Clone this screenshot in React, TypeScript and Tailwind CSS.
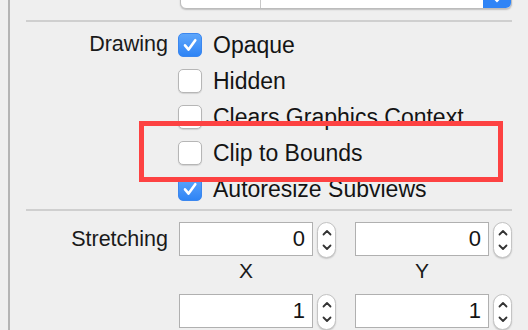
import React from "react";

function Check({ checked }: { checked?: boolean }) {
  if (checked) {
    return (
      <div className="flex h-[24px] w-[24px] shrink-0 items-center justify-center rounded-[5px] border border-[#3b87ef] bg-gradient-to-b from-[#5ea6fb] to-[#2e84f5]">
        <svg width="24" height="24" viewBox="0 0 24 24" className="-m-px">
          <path d="M7 12.3 L10.6 16.6 L17.3 7.2" fill="none" stroke="white" strokeWidth="2.6" strokeLinecap="round" strokeLinejoin="round" />
        </svg>
      </div>
    );
  }
  return (
    <div className="h-[24px] w-[24px] shrink-0 rounded-[5px] border border-[#b6b6b6] bg-white shadow-[0_1px_1px_rgba(0,0,0,0.12)]" />
  );
}

function Row({ label, text, checked }: { label?: string; text: string; checked?: boolean }) {
  return (
    <div className="flex h-[36px] items-center">
      <div className="w-[142px] pr-0 text-right text-[21.5px] leading-none text-[#1a1a1a]">{label}</div>
      <div className="ml-[10px]">
        <Check checked={checked} />
      </div>
      <div className="ml-[11px] whitespace-nowrap text-[23px] leading-none text-[#141414]">{text}</div>
    </div>
  );
}

function Stepper() {
  return (
    <div className="flex h-[36px] w-[19px] flex-col items-center justify-between rounded-full border border-[#c4c4c4] bg-white py-[6px] shadow-[0_1px_1.5px_rgba(0,0,0,0.18)]">
      <svg width="10" height="7" viewBox="0 0 10 7">
        <path d="M1.5 5.5 L5 2 L8.5 5.5" fill="none" stroke="#333" strokeWidth="1.8" strokeLinecap="round" strokeLinejoin="round" />
      </svg>
      <svg width="10" height="7" viewBox="0 0 10 7">
        <path d="M1.5 1.5 L5 5 L8.5 1.5" fill="none" stroke="#333" strokeWidth="1.8" strokeLinecap="round" strokeLinejoin="round" />
      </svg>
    </div>
  );
}

function Field({ value }: { value: string }) {
  return (
    <div className="flex h-[34px] w-[134px] items-center justify-end border border-[#b0b0b0] bg-white pr-[7px] text-[22px] leading-none text-[#141414]">
      {value}
    </div>
  );
}

function FieldPair({ value }: { value: string }) {
  return (
    <div className="flex items-start gap-[4px]">
      <Field value={value} />
      <Stepper />
    </div>
  );
}

export default function App() {
  return (
    <div
      className="relative flex h-[330px] w-[528px] overflow-hidden bg-[#efefef]"
      style={{ fontFamily: '"Liberation Sans", Arial, sans-serif' }}
    >
      <div className="ml-[8px] w-[2px] shrink-0 bg-[#b4b4b4]" />
      <div className="flex flex-1 flex-col pl-[16px] pr-[16px]">
        {/* top control (cut off) */}
        <div className="h-[10px] overflow-visible">
          <div className="ml-[154px] -mt-[22px] flex h-[31px] w-[332px] overflow-hidden rounded-b-[6px] border border-[#bcbcbc] bg-white shadow-[0_1px_1.5px_rgba(0,0,0,0.2)]">
            <div className="w-[80px] border-r border-[#c8c8c8]" />
            <div className="flex-1" />
            <div className="flex w-[28px] justify-center bg-[#2f84f6]">
              <svg width="10" height="26" viewBox="0 0 10 26">
                <path d="M2 19 L5 22 L8 19" fill="none" stroke="white" strokeWidth="2" strokeLinecap="round" />
              </svg>
            </div>
          </div>
        </div>
        <div className="mt-[10px] h-[2px] bg-[#cfcfcf]" />
        <div className="mt-[5px] flex flex-col">
          <Row label="Drawing" text="Opaque" checked />
          <Row text="Hidden" />
          <Row text="Clears Graphics Context" />
          <Row text="Clip to Bounds" />
          <Row text="Autoresize Subviews" checked />
        </div>
        <div className="mt-[2px] h-[2px] bg-[#cfcfcf]" />
        <div className="mt-[11px] flex items-start">
          <div className="flex h-[36px] w-[142px] items-center justify-end text-[21.5px] leading-none text-[#1a1a1a]">
            Stretching
          </div>
          <div className="ml-[11px] flex flex-col">
            <div className="flex items-start gap-[19px]">
              <FieldPair value="0" />
              <FieldPair value="0" />
            </div>
            <div className="mt-[3px] flex h-[20px] gap-[42px] text-[21px] leading-[20px] text-[#1a1a1a]">
              <div className="w-[134px] text-center">X</div>
              <div className="w-[134px] text-center">Y</div>
            </div>
            <div className="mt-[13px] flex items-start gap-[19px]">
              <FieldPair value="1" />
              <FieldPair value="1" />
            </div>
          </div>
        </div>
      </div>
      <div className="absolute left-[139px] top-[121px] h-[61px] w-[364px] border-[5px] border-[#fd4242]" />
    </div>
  );
}
